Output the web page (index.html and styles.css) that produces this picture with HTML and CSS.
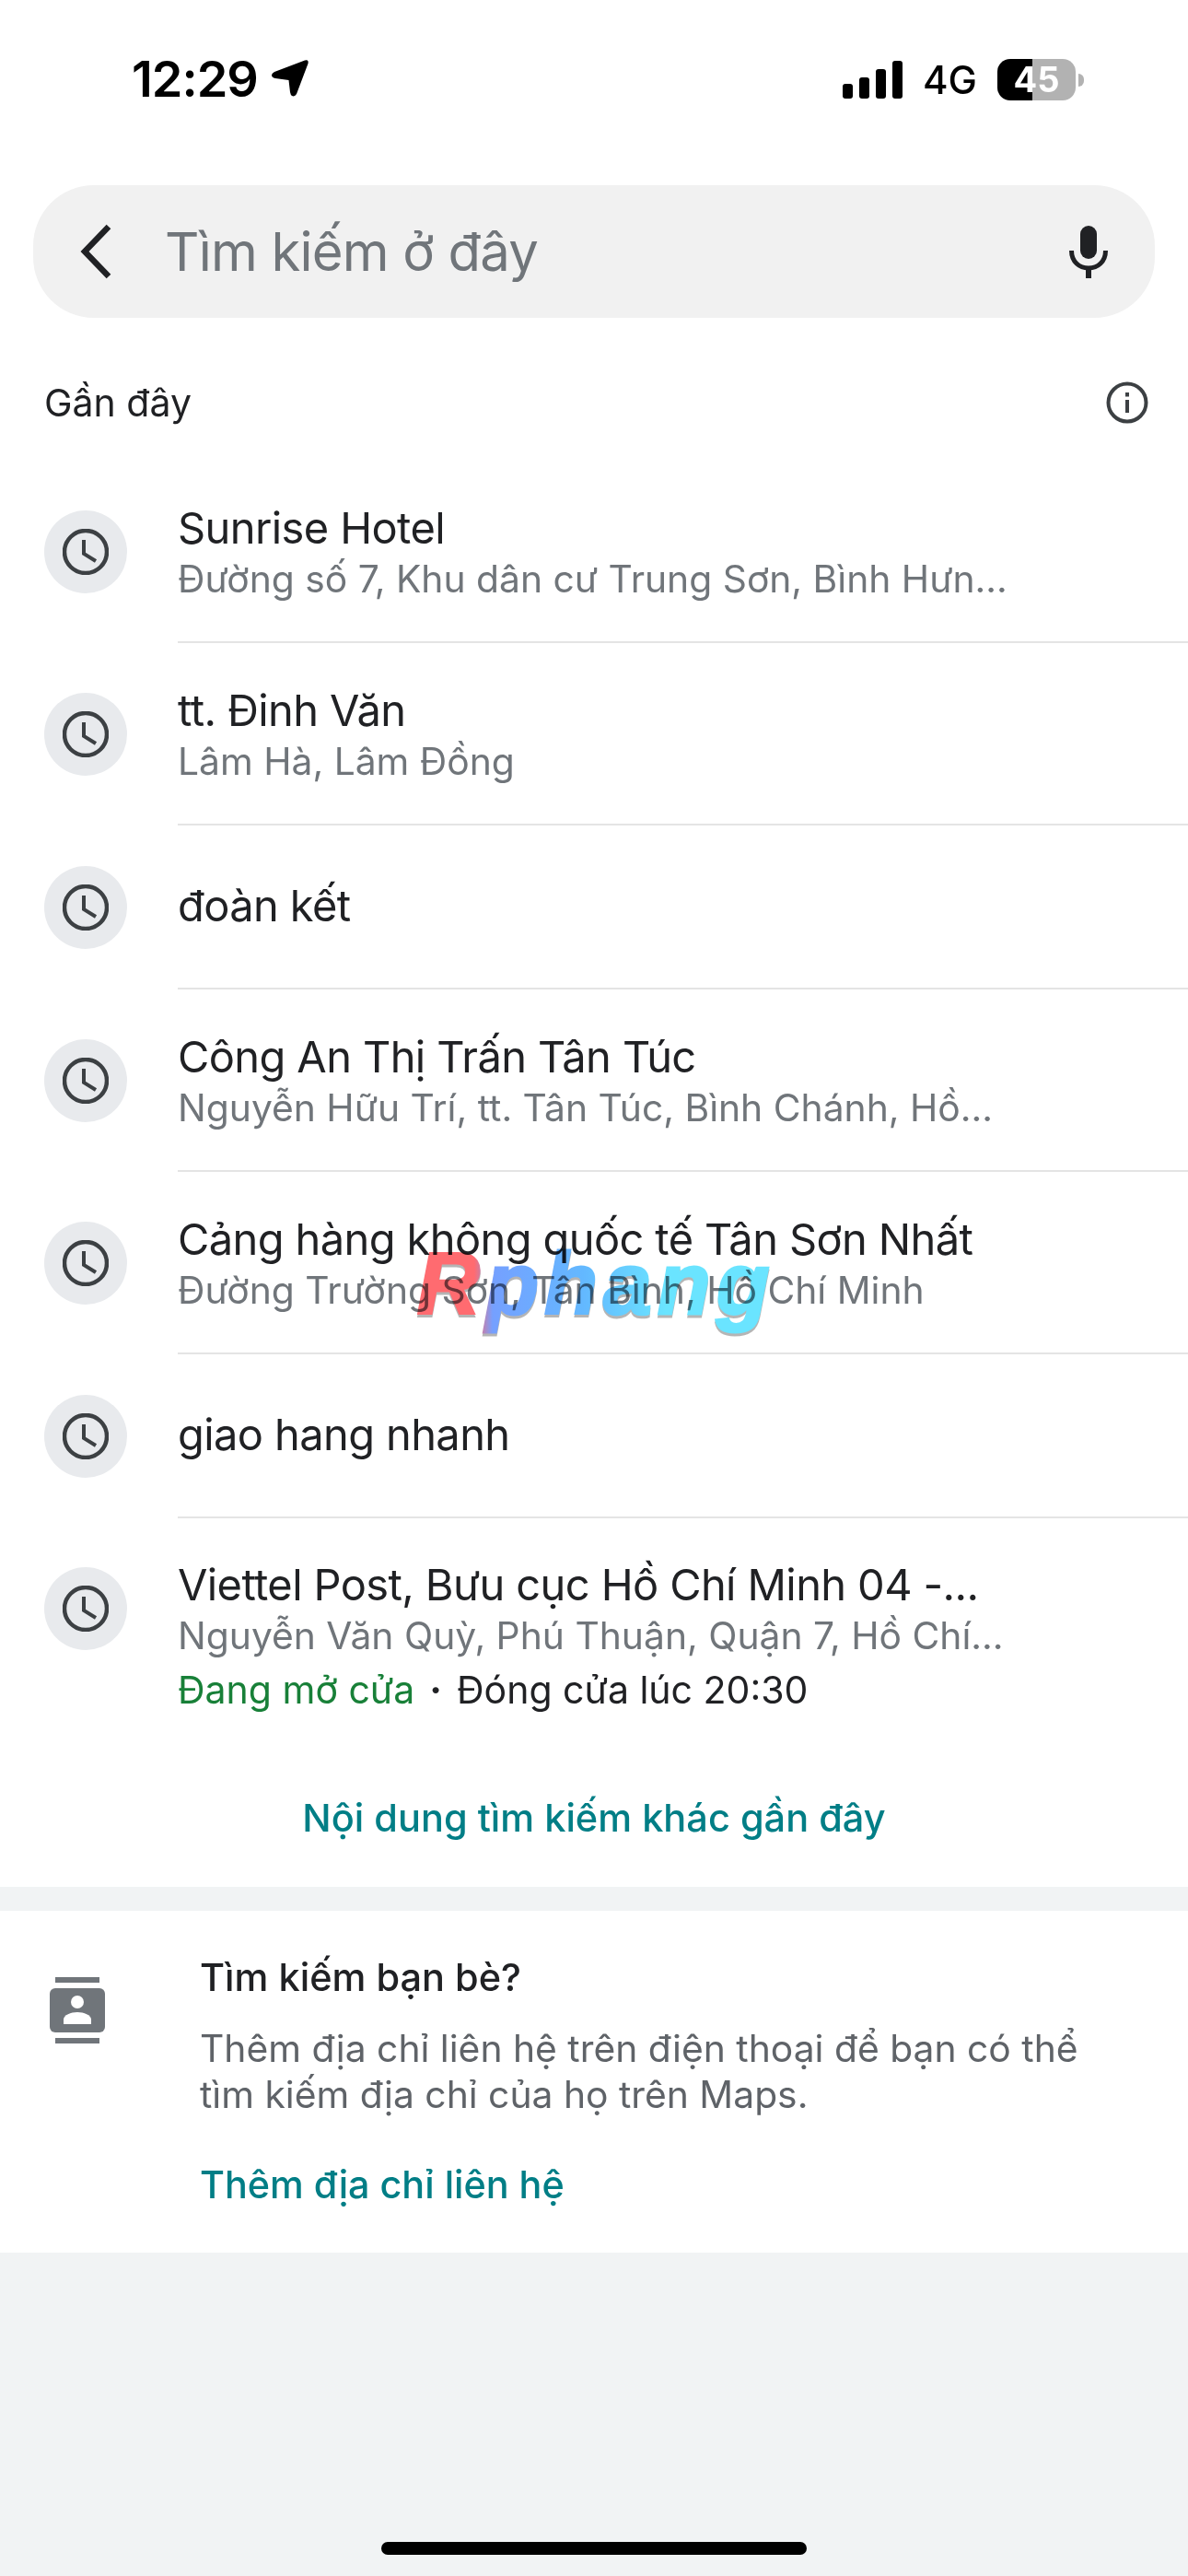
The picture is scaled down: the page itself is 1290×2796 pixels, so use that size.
FILE: index.html
```html
<!DOCTYPE html>
<html lang="vi">
<head>
  <meta charset="UTF-8">
  <meta name="viewport" content="width=device-width, initial-scale=1.0">
  <title>Tìm kiếm ở đây</title>
  <link rel="stylesheet" href="styles.css">
</head>
<body>
  <div class="screen">
    <!-- status bar -->
    <div class="status-bar">
      <div class="status-left">
        <span class="time">12:29</span>
        <svg class="arrow" viewBox="0 0 42 42"><path d="M37 1.5 Q41.5 0 40.5 5 L28 38 Q26 41.5 23 40 Q21.5 39 21 36 L19.5 23 L5 21 Q1 20 1 17.5 Q1 15.5 4 14 Z" fill="#000"/></svg>
      </div>
      <div class="status-right">
        <div class="signal"><i class="s1"></i><i class="s2"></i><i class="s3"></i><i class="s4"></i></div>
        <span class="net">4G</span>
        <div class="battery">45</div>
        <div class="battery-nub"></div>
      </div>
    </div>

    <!-- search -->
    <div class="search">
      <svg class="back" viewBox="0 0 36 60"><path d="M32 3 L6 30 L32 57" fill="none" stroke="#202124" stroke-width="6.5"/></svg>
      <span class="placeholder">Tìm kiếm ở đây</span>
      <svg class="mic" viewBox="0 0 42 57"><rect x="12" y="0" width="18" height="36" rx="9" fill="#202124"/><path d="M2.5 27 C2.5 39 11 46 21 46 C31 46 39.5 39 39.5 27" fill="none" stroke="#202124" stroke-width="5"/><rect x="18" y="45" width="6" height="12" fill="#202124"/></svg>
    </div>

    <div class="recent-head">
      <span>Gần đây</span>
      <svg class="info" viewBox="0 0 46 46"><circle cx="23" cy="23" r="20.5" fill="none" stroke="#3c4043" stroke-width="4"/><rect x="21" y="20" width="4" height="14" fill="#3c4043"/><rect x="21" y="12" width="4" height="4.5" fill="#3c4043"/></svg>
    </div>

    <div class="recent-list">
      <div class="row">
        <div class="clock"><svg viewBox="0 0 50 50"><circle cx="25" cy="25" r="23" fill="none" stroke="#3c4043" stroke-width="4.5"/><path d="M23 12 V27 L36 35" fill="none" stroke="#3c4043" stroke-width="4"/></svg></div>
        <div class="row-text"><div class="name">Sunrise Hotel</div><div class="addr">Đường số 7, Khu dân cư Trung Sơn, Bình Hưn...</div></div>
      </div>
      <div class="row">
        <div class="clock"><svg viewBox="0 0 50 50"><circle cx="25" cy="25" r="23" fill="none" stroke="#3c4043" stroke-width="4.5"/><path d="M23 12 V27 L36 35" fill="none" stroke="#3c4043" stroke-width="4"/></svg></div>
        <div class="row-text"><div class="name">tt. Đinh Văn</div><div class="addr">Lâm Hà, Lâm Đồng</div></div>
      </div>
      <div class="row single">
        <div class="clock"><svg viewBox="0 0 50 50"><circle cx="25" cy="25" r="23" fill="none" stroke="#3c4043" stroke-width="4.5"/><path d="M23 12 V27 L36 35" fill="none" stroke="#3c4043" stroke-width="4"/></svg></div>
        <div class="row-text"><div class="name">đoàn kết</div></div>
      </div>
      <div class="row">
        <div class="clock"><svg viewBox="0 0 50 50"><circle cx="25" cy="25" r="23" fill="none" stroke="#3c4043" stroke-width="4.5"/><path d="M23 12 V27 L36 35" fill="none" stroke="#3c4043" stroke-width="4"/></svg></div>
        <div class="row-text"><div class="name">Công An Thị Trấn Tân Túc</div><div class="addr">Nguyễn Hữu Trí, tt. Tân Túc, Bình Chánh, Hồ...</div></div>
      </div>
      <div class="row">
        <div class="clock"><svg viewBox="0 0 50 50"><circle cx="25" cy="25" r="23" fill="none" stroke="#3c4043" stroke-width="4.5"/><path d="M23 12 V27 L36 35" fill="none" stroke="#3c4043" stroke-width="4"/></svg></div>
        <div class="row-text"><div class="name">Cảng hàng không quốc tế Tân Sơn Nhất</div><div class="addr">Đường Trường Sơn, Tân Bình, Hồ Chí Minh</div></div>
      </div>
      <div class="row single">
        <div class="clock"><svg viewBox="0 0 50 50"><circle cx="25" cy="25" r="23" fill="none" stroke="#3c4043" stroke-width="4.5"/><path d="M23 12 V27 L36 35" fill="none" stroke="#3c4043" stroke-width="4"/></svg></div>
        <div class="row-text"><div class="name">giao hang nhanh</div></div>
      </div>
      <div class="row last">
        <div class="clock"><svg viewBox="0 0 50 50"><circle cx="25" cy="25" r="23" fill="none" stroke="#3c4043" stroke-width="4.5"/><path d="M23 12 V27 L36 35" fill="none" stroke="#3c4043" stroke-width="4"/></svg></div>
        <div class="row-text">
          <div class="name">Viettel Post, Bưu cục Hồ Chí Minh 04 -...</div>
          <div class="addr">Nguyễn Văn Quỳ, Phú Thuận, Quận 7, Hồ Chí...</div>
          <div class="hours"><span class="open">Đang mở cửa</span><span class="dot">·</span><span>Đóng cửa lúc 20:30</span></div>
        </div>
      </div>
    </div>

    <div class="more-link">Nội dung tìm kiếm khác gần đây</div>

    <div class="friends">
      <svg class="contacts" viewBox="0 0 60 72"><rect x="6" y="0" width="48" height="6" fill="#70757a"/><rect x="6" y="66" width="48" height="6" fill="#70757a"/><rect x="0" y="12" width="60" height="48" rx="6" fill="#70757a"/><circle cx="30" cy="27" r="7" fill="#fff"/><path d="M15 51 V46 C15 41 23 38 30 38 C37 38 45 41 45 46 V51 Z" fill="#fff"/></svg>
      <div class="friends-text">
        <div class="friends-title">Tìm kiếm bạn bè?</div>
        <div class="friends-body">Thêm địa chỉ liên hệ trên điện thoại để bạn có thể tìm kiếm địa chỉ của họ trên Maps.</div>
        <div class="friends-link">Thêm địa chỉ liên hệ</div>
      </div>
    </div>

    <div class="filler">
      <div class="home-bar"></div>
    </div>

    <div class="watermark">Rphang</div>
  </div>
</body>
</html>
```

FILE: styles.css
```css
* {
  box-sizing: border-box;
}

html,
body {
  margin: 0;
  padding: 0;
}

body {
  font-family: "Inter", "Noto Sans", sans-serif;
  background-color: #ffffff;
  color: #202124;
}

.screen {
  position: relative;
  width: 1290px;
  height: 2796px;
  display: flex;
  flex-direction: column;
  overflow: hidden;
}

/* status bar */
.status-bar {
  height: 201px;
  flex-shrink: 0;
  display: flex;
  justify-content: space-between;
  align-items: flex-start;
  padding: 60px 113px 0 143px;
}

.status-left {
  display: flex;
  align-items: center;
  gap: 14px;
  height: 50px;
}

.time {
  font-family: "Inter", sans-serif;
  font-size: 54px;
  font-weight: 600;
  color: #000;
  letter-spacing: -1px;
}

.arrow {
  width: 42px;
  height: 42px;
}

.status-right {
  display: flex;
  align-items: center;
  height: 45px;
  margin-top: 4px;
}

.signal {
  display: flex;
  align-items: flex-end;
  gap: 7px;
  height: 41px;
  width: 65px;
  margin-right: 22px;
}

.signal i {
  display: block;
  width: 11px;
  background-color: #000;
  border-radius: 3px;
}

.s1 { height: 16px; }
.s2 { height: 23px; }
.s3 { height: 32px; }
.s4 { height: 41px; }

.net {
  font-size: 42px;
  font-weight: 500;
  color: #000;
  margin-right: 22px;
}

.battery {
  width: 85px;
  height: 45px;
  border-radius: 14px;
  background: linear-gradient(to right, #000 38px, #b2b2b2 38px);
  color: #fff;
  font-size: 38px;
  font-weight: 700;
  text-align: center;
  line-height: 45px;
}

.battery-nub {
  width: 6px;
  height: 14px;
  margin-left: 3px;
  background-color: #b2b2b2;
  border-radius: 0 7px 7px 0;
}

/* search */
.search {
  flex-shrink: 0;
  height: 144px;
  margin: 0 36px 0 36px;
  background-color: #f1f1f1;
  border-radius: 66px;
  display: flex;
  align-items: center;
  padding: 0 51px 0 50px;
}

.back {
  width: 36px;
  height: 60px;
  flex-shrink: 0;
}

.placeholder {
  flex: 1;
  margin-left: 57px;
  font-size: 58px;
  letter-spacing: -0.8px;
  color: #70757a;
}

.mic {
  width: 42px;
  height: 57px;
  flex-shrink: 0;
}

.recent-head {
  flex-shrink: 0;
  height: 155px;
  display: flex;
  justify-content: space-between;
  align-items: center;
  padding: 28px 43px 0 48px;
  font-size: 41px;
}

.info {
  width: 46px;
  height: 46px;
}

/* recent list */
.row {
  display: flex;
  height: 198px;
  padding-left: 48px;
  align-items: center;
}

.row.single {
  height: 178px;
}

.row.last {
  height: 283px;
  align-items: flex-start;
}

.clock {
  width: 90px;
  height: 90px;
  flex-shrink: 0;
  border-radius: 50%;
  background-color: #e8eaed;
  display: flex;
  align-items: center;
  justify-content: center;
}

.row.last .clock {
  margin-top: 53px;
}

.clock svg {
  width: 50px;
  height: 50px;
}

.row-text {
  flex: 1;
  height: 100%;
  margin-left: 55px;
  padding-bottom: 3px;
  border-bottom: 2px solid #e4e4e4;
  display: flex;
  flex-direction: column;
  justify-content: center;
}

.row.last .row-text {
  border-bottom: none;
  justify-content: flex-start;
  padding-top: 41px;
}

.name {
  font-size: 47px;
  letter-spacing: -0.6px;
  line-height: 62px;
  white-space: nowrap;
}

.addr {
  font-size: 40.8px;
  line-height: 48px;
  color: #70757a;
  white-space: nowrap;
}

.hours {
  margin-top: 11px;
  font-size: 41px;
  line-height: 48px;
  white-space: nowrap;
}

.open {
  color: #188038;
}

.dot {
  margin: 0 16px;
  font-weight: 700;
}

.more-link {
  flex-shrink: 0;
  height: 117px;
  font-size: 41.5px;
  font-weight: 500;
  color: #017e86;
  text-align: center;
  line-height: 84px;
}

/* friends card */
.friends {
  flex-shrink: 0;
  height: 371px;
  margin-top: 26px;
  position: relative;
  display: flex;
  padding: 0 48px 0 54px;
  background-color: #fff;
  box-shadow: 0 -26px 0 #f1f3f4;
}

.contacts {
  width: 60px;
  height: 72px;
  margin-top: 72px;
  flex-shrink: 0;
}

.friends-text {
  margin-left: 103px;
  padding-top: 45px;
}

.friends-title {
  font-size: 41.5px;
  line-height: 54px;
  font-weight: 500;
}

.friends-body {
  max-width: 990px;
  margin-top: 25px;
  font-size: 40.8px;
  line-height: 50px;
  color: #5f6368;
}

.friends-link {
  margin-top: 48px;
  font-size: 41.3px;
  line-height: 50px;
  font-weight: 500;
  color: #017e86;
}

.filler {
  flex: 1;
  background-color: #f1f3f4;
  display: flex;
  flex-direction: column;
  justify-content: flex-end;
  align-items: center;
  padding-bottom: 23px;
}

.home-bar {
  width: 462px;
  height: 14px;
  border-radius: 7px;
  background-color: #000;
}

/* watermark over the list */
.watermark {
  position: absolute;
  left: 453px;
  top: 1339px;
  font-family: "Liberation Sans", sans-serif;
  font-size: 94px;
  font-weight: 700;
  font-style: italic;
  line-height: 110px;
  letter-spacing: 6.5px;
  padding-right: 6px;
  background: linear-gradient(to right, #ff6b70 0, #ff6b70 62px, #75a0ff 82px, #63b8ff 180px, #6ae4ff 270px);
  -webkit-background-clip: text;
  background-clip: text;
  color: transparent;
  -webkit-text-stroke: 3px transparent;
  mix-blend-mode: multiply;
  filter: drop-shadow(0 3px 0 rgba(90, 90, 90, 0.45));
}
```
